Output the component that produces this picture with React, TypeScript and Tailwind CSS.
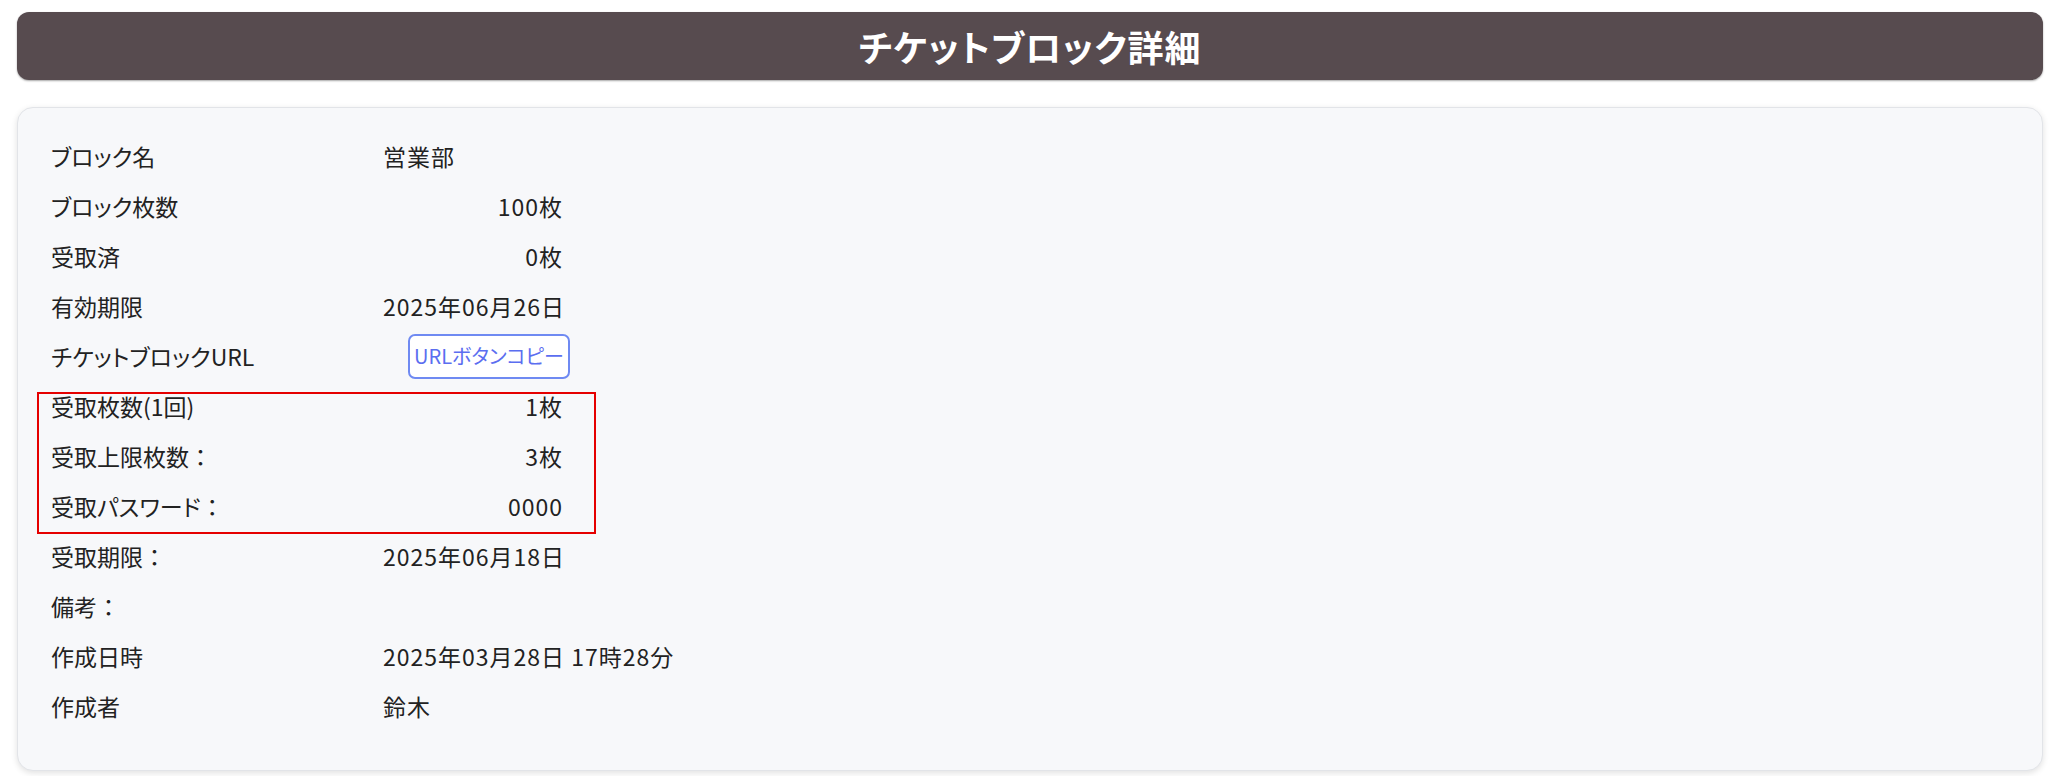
import type React from "react";

type Row = {
  label: string;
  colon?: boolean;
  value?: string;
  align?: "left" | "right";
  button?: boolean;
};

const rows: Row[] = [
  { label: "ブロック名", value: "営業部" },
  { label: "ブロック枚数", value: "100枚", align: "right" },
  { label: "受取済", value: "0枚", align: "right" },
  { label: "有効期限", value: "2025年06月26日" },
  { label: "チケットブロックURL", button: true },
  { label: "受取枚数(1回)", value: "1枚", align: "right" },
  { label: "受取上限枚数", colon: true, value: "3枚", align: "right" },
  { label: "受取パスワード", colon: true, value: "0000", align: "right" },
  { label: "受取期限", colon: true, value: "2025年06月18日" },
  { label: "備考", colon: true, value: "" },
  { label: "作成日時", value: "2025年03月28日 17時28分" },
  { label: "作成者", value: "鈴木" },
];

const DetailRow: React.FC<{ row: Row }> = ({ row }) => {
  return (
    <div className="grid h-[50px] grid-cols-[332px_180px] items-center">
      <div className="whitespace-nowrap">
        {row.label}
        {row.colon && <span className="[font-feature-settings:normal]">：</span>}
      </div>
      {row.button ? (
        <div className="flex">
          <button
            type="button"
            className="ml-[25px] flex h-[45px] w-[162px] shrink-0 items-center justify-center rounded-[7px] border-2 border-[#6f8af2] bg-white text-[20px] text-[#5b6ef0]"
          >
            URLボタンコピー
          </button>
        </div>
      ) : (
        <div
          className={
            row.align === "right"
              ? "whitespace-nowrap text-right tracking-[1px]"
              : "whitespace-nowrap text-left tracking-[1px]"
          }
        >
          {row.value}
        </div>
      )}
    </div>
  );
};

export default function App() {
  return (
    <div className="min-h-screen bg-white pt-[12px] pl-[17px] pr-[26px] font-['Noto_Sans_CJK_JP','Noto_Sans',sans-serif] [font-feature-settings:'palt'] text-[#222]">
      <header className="flex h-[68px] items-center justify-center rounded-[12px] bg-[#574b4f] shadow-[0_1px_2px_rgba(0,0,0,0.35)]">
        <h1 className="text-[36px] font-bold tracking-[1px] text-white">
          チケットブロック詳細
        </h1>
      </header>

      <div className="relative mt-[27px] rounded-[16px] border border-[#e2e4e8] bg-[#f7f8fa] pt-[23px] pb-[39px] pl-[33px] text-[23px] shadow-[0_2px_6px_rgba(0,0,0,0.12)]">
        {rows.map((row) => (
          <DetailRow key={row.label} row={row} />
        ))}
        {/* annotation frame around the receive settings */}
        <div className="pointer-events-none absolute top-[284px] left-[19px] h-[142px] w-[559px] border-2 border-[#e50000]" />
      </div>
    </div>
  );
}
